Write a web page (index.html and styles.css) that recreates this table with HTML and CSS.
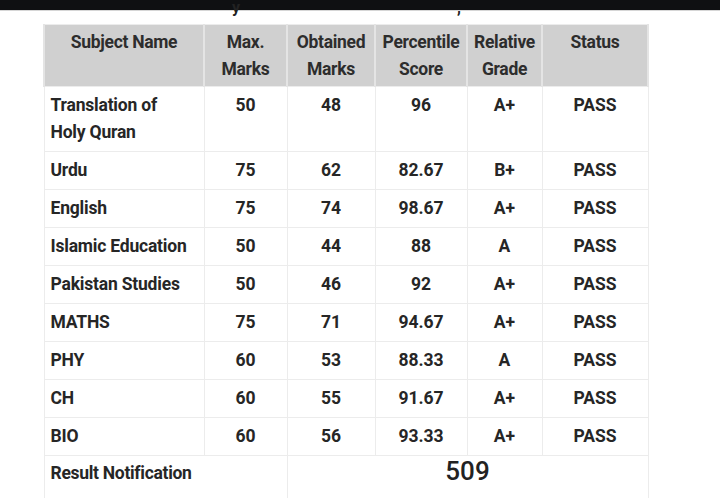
FILE: index.html
```html
<!DOCTYPE html>
<html>
<head>
<meta charset="utf-8">
<link rel="stylesheet" href="styles.css">
</head>
<body>
<div class="topbar"></div>
<div class="caption"><span class="frag frag-y">y</span><span class="frag frag-c">,</span></div>
<table class="result">
  <colgroup>
    <col class="c1"><col class="c2"><col class="c3"><col class="c4"><col class="c5"><col class="c6">
  </colgroup>
  <thead>
    <tr>
      <th class="left-h">Subject Name</th>
      <th>Max.<br>Marks</th>
      <th>Obtained<br>Marks</th>
      <th>Percentile<br>Score</th>
      <th>Relative<br>Grade</th>
      <th>Status</th>
    </tr>
  </thead>
  <tbody>
    <tr><td class="subj">Translation of<br>Holy Quran</td><td>50</td><td>48</td><td>96</td><td>A+</td><td>PASS</td></tr>
    <tr><td class="subj">Urdu</td><td>75</td><td>62</td><td>82.67</td><td>B+</td><td>PASS</td></tr>
    <tr><td class="subj">English</td><td>75</td><td>74</td><td>98.67</td><td>A+</td><td>PASS</td></tr>
    <tr><td class="subj">Islamic Education</td><td>50</td><td>44</td><td>88</td><td>A</td><td>PASS</td></tr>
    <tr><td class="subj">Pakistan Studies</td><td>50</td><td>46</td><td>92</td><td>A+</td><td>PASS</td></tr>
    <tr><td class="subj">MATHS</td><td>75</td><td>71</td><td>94.67</td><td>A+</td><td>PASS</td></tr>
    <tr><td class="subj">PHY</td><td>60</td><td>53</td><td>88.33</td><td>A</td><td>PASS</td></tr>
    <tr><td class="subj">CH</td><td>60</td><td>55</td><td>91.67</td><td>A+</td><td>PASS</td></tr>
    <tr><td class="subj">BIO</td><td>60</td><td>56</td><td>93.33</td><td>A+</td><td>PASS</td></tr>
    <tr class="total"><td class="subj notif" colspan="2">Result Notification</td><td class="sum" colspan="4">509</td></tr>
  </tbody>
</table>
</body>
</html>
```
FILE: styles.css
```css
html, body {
  margin: 0;
  padding: 0;
  background: #ffffff;
}
body {
  font-family: Roboto, "Liberation Sans", sans-serif;
  color: #262626;
  width: 720px;
  height: 498px;
  overflow: hidden;
}
.topbar {
  height: 10px;
  background: #0f1012;
  border-bottom: 1px solid #d6d6d6;
}
.caption {
  position: relative;
  height: 13px;
}
.frag {
  position: absolute;
  top: -12px;
  font-size: 16px;
  font-weight: 700;
  line-height: 18px;
  color: #222;
}
.frag-y { left: 232px; }
.frag-c { left: 457px; }
.result {
  margin-left: 43px;
  border-collapse: collapse;
  table-layout: fixed;
  width: 604px;
  border: 1px solid #ececec;
}
.c1 { width: 160px; }
.c2 { width: 83px; }
.c3 { width: 88px; }
.c4 { width: 92px; }
.c5 { width: 75px; }
.c6 { width: 106px; }
th {
  background: #d0d0d0;
  color: #2d2d2d;
  font-size: 17.5px;
  font-weight: 700;
  line-height: 27px;
  padding: 4px 0 3px;
  text-align: center;
  vertical-align: top;
  border-left: 2px solid #e4e4e4;
  border-right: 2px solid #e4e4e4;
  letter-spacing: -0.3px;
}
td {
  font-size: 17.5px;
  font-weight: 700;
  line-height: 27px;
  padding: 5px 0;
  text-align: center;
  vertical-align: top;
  border: 1px solid #ececec;
  color: #262626;
}
td.subj {
  text-align: left;
  padding-left: 6px;
  letter-spacing: -0.2px;
}
td.notif {
  padding-top: 4px;
  letter-spacing: -0.3px;
}
td.sum {
  font-size: 26px;
  font-weight: 500;
  padding-top: 2px;
  color: #222;
}
.total td {
  height: 34px;
}
```
